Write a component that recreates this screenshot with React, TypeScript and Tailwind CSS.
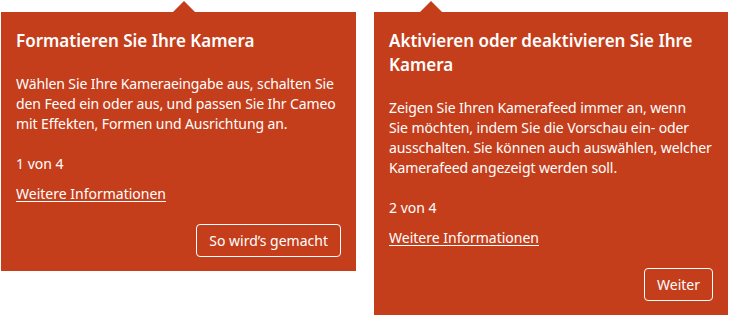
import React from "react";

type Tip = {
  title: string;
  body: string;
  step: string;
  action: string;
  arrowOffset: string;
  width: string;
};

const TIPS: Tip[] = [
  {
    title: "Formatieren Sie Ihre Kamera",
    body: "Wählen Sie Ihre Kameraeingabe aus, schalten Sie den Feed ein oder aus, und passen Sie Ihr Cameo mit Effekten, Formen und Ausrichtung an.",
    step: "1 von 4",
    action: "So wird’s gemacht",
    arrowOffset: "ml-[172px]",
    width: "w-[355px]",
  },
  {
    title: "Aktivieren oder deaktivieren Sie Ihre Kamera",
    // keep the original wrap after "wenn"
    body: "Zeigen Sie Ihren Kamerafeed immer an, wenn\nSie möchten, indem Sie die Vorschau ein- oder ausschalten. Sie können auch auswählen, welcher Kamerafeed angezeigt werden soll.",
    step: "2 von 4",
    action: "Weiter",
    arrowOffset: "ml-[46px]",
    width: "w-[354px]",
  },
];

function TeachingCallout({ tip }: { tip: Tip }) {
  return (
    <div className={`flex flex-col ${tip.width}`}>
      {/* beak pointing up at the ribbon button */}
      <div
        className={`${tip.arrowOffset} h-0 w-0 border-x-[11px] border-b-[11px] border-x-transparent border-b-[#c43e1c]`}
      />
      <div className="flex flex-col bg-[#c43e1c] px-[15px] pt-[17px] pb-[14px] text-white">
        <h2 className="text-[17px] font-semibold leading-[24px]">{tip.title}</h2>
        <p className="mt-[21px] whitespace-pre-line text-[14px] leading-[20px] tracking-[-0.1px]">{tip.body}</p>
        <div className="mt-[20px] text-[14px] leading-[20px]">{tip.step}</div>
        <a href="#" className="mt-[10px] self-start text-[14px] leading-[20px] underline underline-offset-2">
          Weitere Informationen
        </a>
        <div className="mt-[20px] flex justify-end">
          <button className="h-[33px] rounded-[4px] border border-white px-3 text-[14px] text-white">
            {tip.action}
          </button>
        </div>
      </div>
    </div>
  );
}

export default function App() {
  return (
    <div
      className="flex min-h-[318px] w-[730px] items-start gap-[18px] bg-white pt-[1px] pl-[1px]"
      style={{ fontFamily: '"Noto Sans", "Open Sans", sans-serif' }}
    >
      {TIPS.map((tip) => (
        <TeachingCallout key={tip.step} tip={tip} />
      ))}
    </div>
  );
}
